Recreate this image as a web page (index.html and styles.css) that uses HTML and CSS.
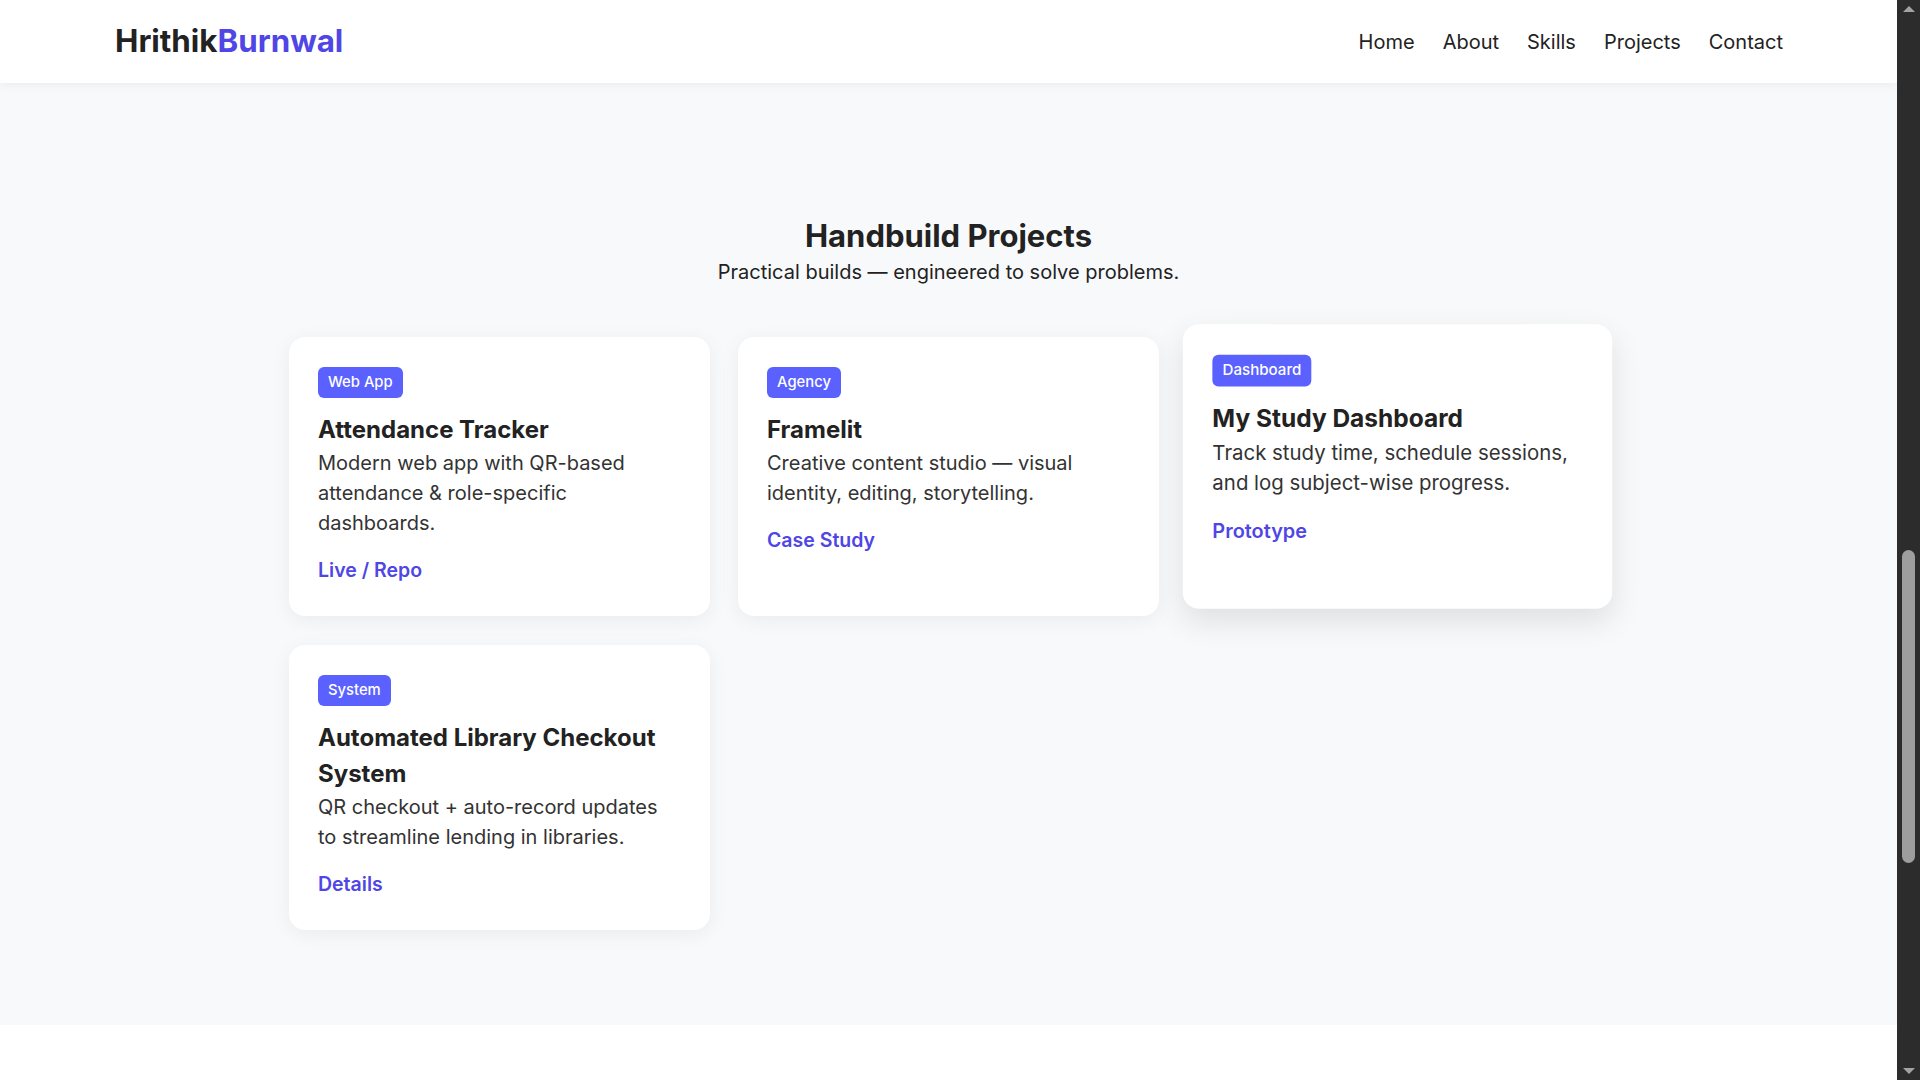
FILE: index.html
```html
<!DOCTYPE html>
<html lang="en">
<head>
<meta charset="utf-8">
<title>Hrithik Burnwal — Projects</title>
<link rel="stylesheet" href="styles.css">
</head>
<body>
<div class="viewport">
  <div class="page">
    <header class="site-header">
      <a class="logo" href="#">Hrithik<span class="logo-accent">Burnwal</span></a>
      <nav class="nav">
        <a href="#">Home</a>
        <a href="#">About</a>
        <a href="#">Skills</a>
        <a href="#">Projects</a>
        <a href="#">Contact</a>
      </nav>
    </header>
    <main>
      <section class="projects">
        <div class="section-head">
          <h2 class="section-title">Handbuild Projects</h2>
          <p class="section-sub">Practical builds — engineered to solve problems.</p>
        </div>
        <div class="grid">
          <article class="card">
            <span class="badge">Web App</span>
            <h3 class="card-title">Attendance Tracker</h3>
            <p class="card-desc">Modern web app with QR-based attendance &amp; role-specific dashboards.</p>
            <a class="card-link" href="#">Live / Repo</a>
          </article>
          <article class="card">
            <span class="badge">Agency</span>
            <h3 class="card-title">Framelit</h3>
            <p class="card-desc">Creative content studio — visual identity, editing, storytelling.</p>
            <a class="card-link" href="#">Case Study</a>
          </article>
          <article class="card card-hover">
            <span class="badge">Dashboard</span>
            <h3 class="card-title">My Study Dashboard</h3>
            <p class="card-desc">Track study time, schedule sessions, and log subject-wise progress.</p>
            <a class="card-link" href="#">Prototype</a>
          </article>
          <article class="card">
            <span class="badge">System</span>
            <h3 class="card-title">Automated Library Checkout System</h3>
            <p class="card-desc">QR checkout + auto-record updates to streamline lending in libraries.</p>
            <a class="card-link" href="#">Details</a>
          </article>
        </div>
      </section>
      <section class="next-section"></section>
    </main>
  </div>
  <div class="scrollbar">
    <span class="sb-arrow sb-up"></span>
    <div class="sb-track"><div class="sb-thumb"></div></div>
    <span class="sb-arrow sb-down"></span>
  </div>
</div>
</body>
</html>
```
FILE: styles.css
```css
* { box-sizing: border-box; }
html, body { margin: 0; padding: 0; height: 100%; overflow: hidden; }
body {
  font-family: "Inter", "Open Sans", sans-serif;
  color: #222;
  background: #fff;
}
a { text-decoration: none; }

.viewport { display: flex; height: 100vh; }
.page { flex: 1; display: flex; flex-direction: column; overflow: hidden; background: #fff; }

.site-header {
  position: relative;
  z-index: 2;
  height: 83px;
  flex: none;
  display: flex;
  align-items: center;
  justify-content: space-between;
  padding: 0 114px 0 115px;
  background: #fff;
  box-shadow: 0 2px 10px rgba(0, 0, 0, 0.06);
}
.logo {
  font-size: 31.3px;
  font-weight: 700;
  color: #222;
  letter-spacing: 0;
  line-height: 1;
}
.logo-accent { color: #4f46e5; }
.nav { display: flex; gap: 28px; }
.nav a {
  font-size: 20px;
  color: #222;
  line-height: 1;
}

main { flex: 1; display: flex; flex-direction: column; }
.projects {
  background: #f8f9fb;
  padding: 134px 0 95px;
  display: flex;
  flex-direction: column;
  align-items: center;
}
.section-head { text-align: center; }
.section-title {
  margin: 0;
  font-size: 31px;
  line-height: 37px;
  font-weight: 700;
  color: #222;
}
.section-sub {
  margin: 4px 0 0;
  font-size: 20px;
  line-height: 28px;
  color: #222;
}

.grid {
  margin-top: 51px;
  display: grid;
  grid-template-columns: repeat(3, 421px);
  gap: 29px 28px;
}
.card {
  background: #fff;
  border-radius: 16px;
  padding: 30px 29px 32px;
  box-shadow: 0 4px 20px rgba(0, 0, 0, 0.06);
  display: flex;
  flex-direction: column;
  align-items: flex-start;
}
.card-hover {
  transform: translateY(-10px) scale(1.02);
  box-shadow: 0 12px 30px rgba(0, 0, 0, 0.1);
}
.badge {
  display: inline-block;
  background: #5a61ff;
  color: #fff;
  font-size: 14.8px;
  font-weight: 500;
  line-height: 21px;
  padding: 5px 10px;
  border-radius: 6px;
}
.card-title {
  margin: 14px 0 0;
  font-size: 24px;
  line-height: 36px;
  font-weight: 700;
  color: #222;
}
.card-desc {
  margin: 0;
  font-size: 20px;
  line-height: 30px;
  color: #333;
}
.card-link {
  margin-top: 18px;
  font-size: 19.5px;
  line-height: 28px;
  font-weight: 600;
  color: #4f46e5;
}

.next-section { flex: 1; background: #fff; }

.scrollbar {
  width: 23px;
  flex: none;
  background: #2c2c2c;
  display: flex;
  flex-direction: column;
  align-items: center;
}
.sb-arrow {
  width: 0; height: 0;
  border-left: 6px solid transparent;
  border-right: 6px solid transparent;
  margin: 6px 0;
}
.sb-up { border-bottom: 6px solid #a3a3a3; }
.sb-down { border-top: 6px solid #a3a3a3; }
.sb-track { flex: 1; width: 100%; display: flex; justify-content: center; padding-top: 532px; }
.sb-thumb { width: 13px; height: 313px; border-radius: 7px; background: #9e9e9e; }
```
